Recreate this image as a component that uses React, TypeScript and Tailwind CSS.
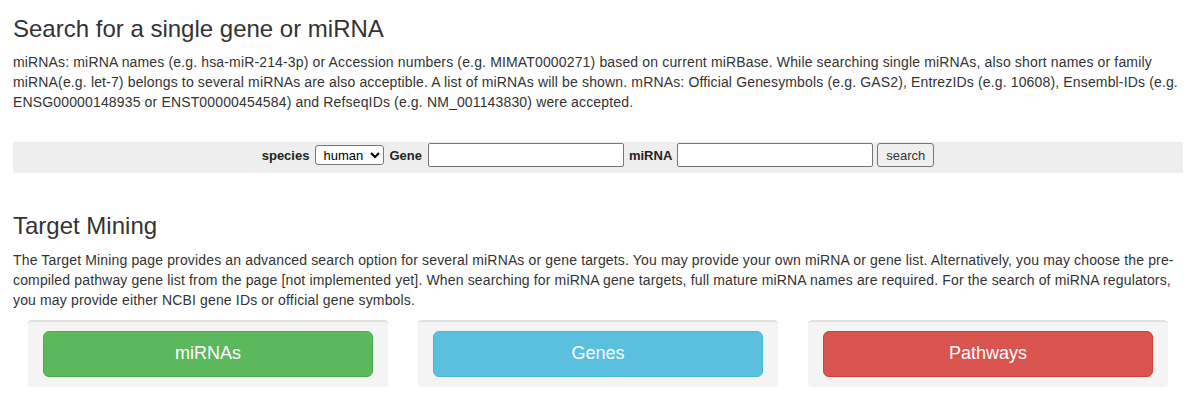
import React from 'react';

const font = { fontFamily: '"Liberation Sans", Arial, Helvetica, sans-serif' };

export default function App() {
  // Target mining entry points
  const targets = [
    { label: 'miRNAs', cls: 'bg-[#5cb85c] border-[#4cae4c]' },
    { label: 'Genes', cls: 'bg-[#5bc0de] border-[#46b8da]' },
    { label: 'Pathways', cls: 'bg-[#d9534f] border-[#d43f3a]' },
  ];

  return (
    <div className="min-h-[401px] bg-white text-[#333] font-['Liberation_Sans',Arial,sans-serif]">
      <div className="ml-[13px] w-[1170px]">
        {/* Single search */}
        <h3 className="mt-[16px] mb-[10px] text-[24px] leading-[1.1] font-normal">
          Search for a single gene or miRNA
        </h3>
        <p className="text-[14px] leading-[20px] tracking-[0.15px]">
          miRNAs: miRNA names (e.g. hsa-miR-214-3p) or Accession numbers (e.g. MIMAT0000271) based on current miRBase. While
          searching single miRNAs, also short names or family miRNA(e.g. let-7) belongs to several miRNAs are also acceptible. A
          list of miRNAs will be shown. mRNAs: Official Genesymbols (e.g. GAS2), EntrezIDs (e.g. 10608), Ensembl-IDs (e.g.
          ENSG00000148935 or ENST00000454584) and RefseqIDs (e.g. NM_001143830) were accepted.
        </p>

        <div className="mt-[30px] h-[31px] pt-[1px] bg-[#eee] flex items-start justify-center text-[13px] text-[#222]">
          <div className="h-[24px] flex items-center">
            <span className="font-bold">species</span>
            <select
              className="ml-[6px] h-[20px] w-[69px] border border-[#767676] rounded-[3px] bg-white text-[13px] text-black pl-[3px]"
              style={font}
              defaultValue="human"
            >
              <option value="human">human</option>
              <option value="mouse">mouse</option>
            </select>
            <span className="ml-[5px] font-bold">Gene</span>
            <input
              type="text"
              className="ml-[6px] h-[24px] w-[196px] border border-[#767676] rounded-[2px] bg-white"
            />
            <span className="ml-[5px] font-bold">miRNA</span>
            <input
              type="text"
              className="ml-[5px] h-[24px] w-[196px] border border-[#767676] rounded-[2px] bg-white"
            />
            <button className="ml-[4px] h-[24px] w-[57px] border border-[#767676] rounded-[3px] bg-[#efefef] text-[13px] text-[#333]">
              search
            </button>
          </div>
        </div>

        {/* Target mining */}
        <h3 className="mt-[40px] mb-[10px] text-[24px] leading-[1.1] font-normal">Target Mining</h3>
        <p className="text-[14px] leading-[20px] tracking-[0.15px]">
          The Target Mining page provides an advanced search option for several miRNAs or gene targets. You may provide your own
          miRNA or gene list. Alternatively, you may choose the pre-compiled pathway gene list from the page [not implemented
          yet]. When searching for miRNA gene targets, full mature miRNA names are required. For the search of miRNA regulators,
          you may provide either NCBI gene IDs or official gene symbols.
        </p>

        <div className="mt-[10px] px-[15px] flex gap-[30px]">
          {targets.map((t) => (
            <div
              key={t.label}
              className="w-[360px] bg-[#f4f4f4] border-t-2 border-[#e0e0e0] rounded-[4px] px-[15px] pt-[9px] pb-[10px]"
            >
              <button
                className={`w-full h-[46px] border rounded-[6px] text-white text-[18px] ${t.cls}`}
              >
                {t.label}
              </button>
            </div>
          ))}
        </div>
      </div>
    </div>
  );
}
